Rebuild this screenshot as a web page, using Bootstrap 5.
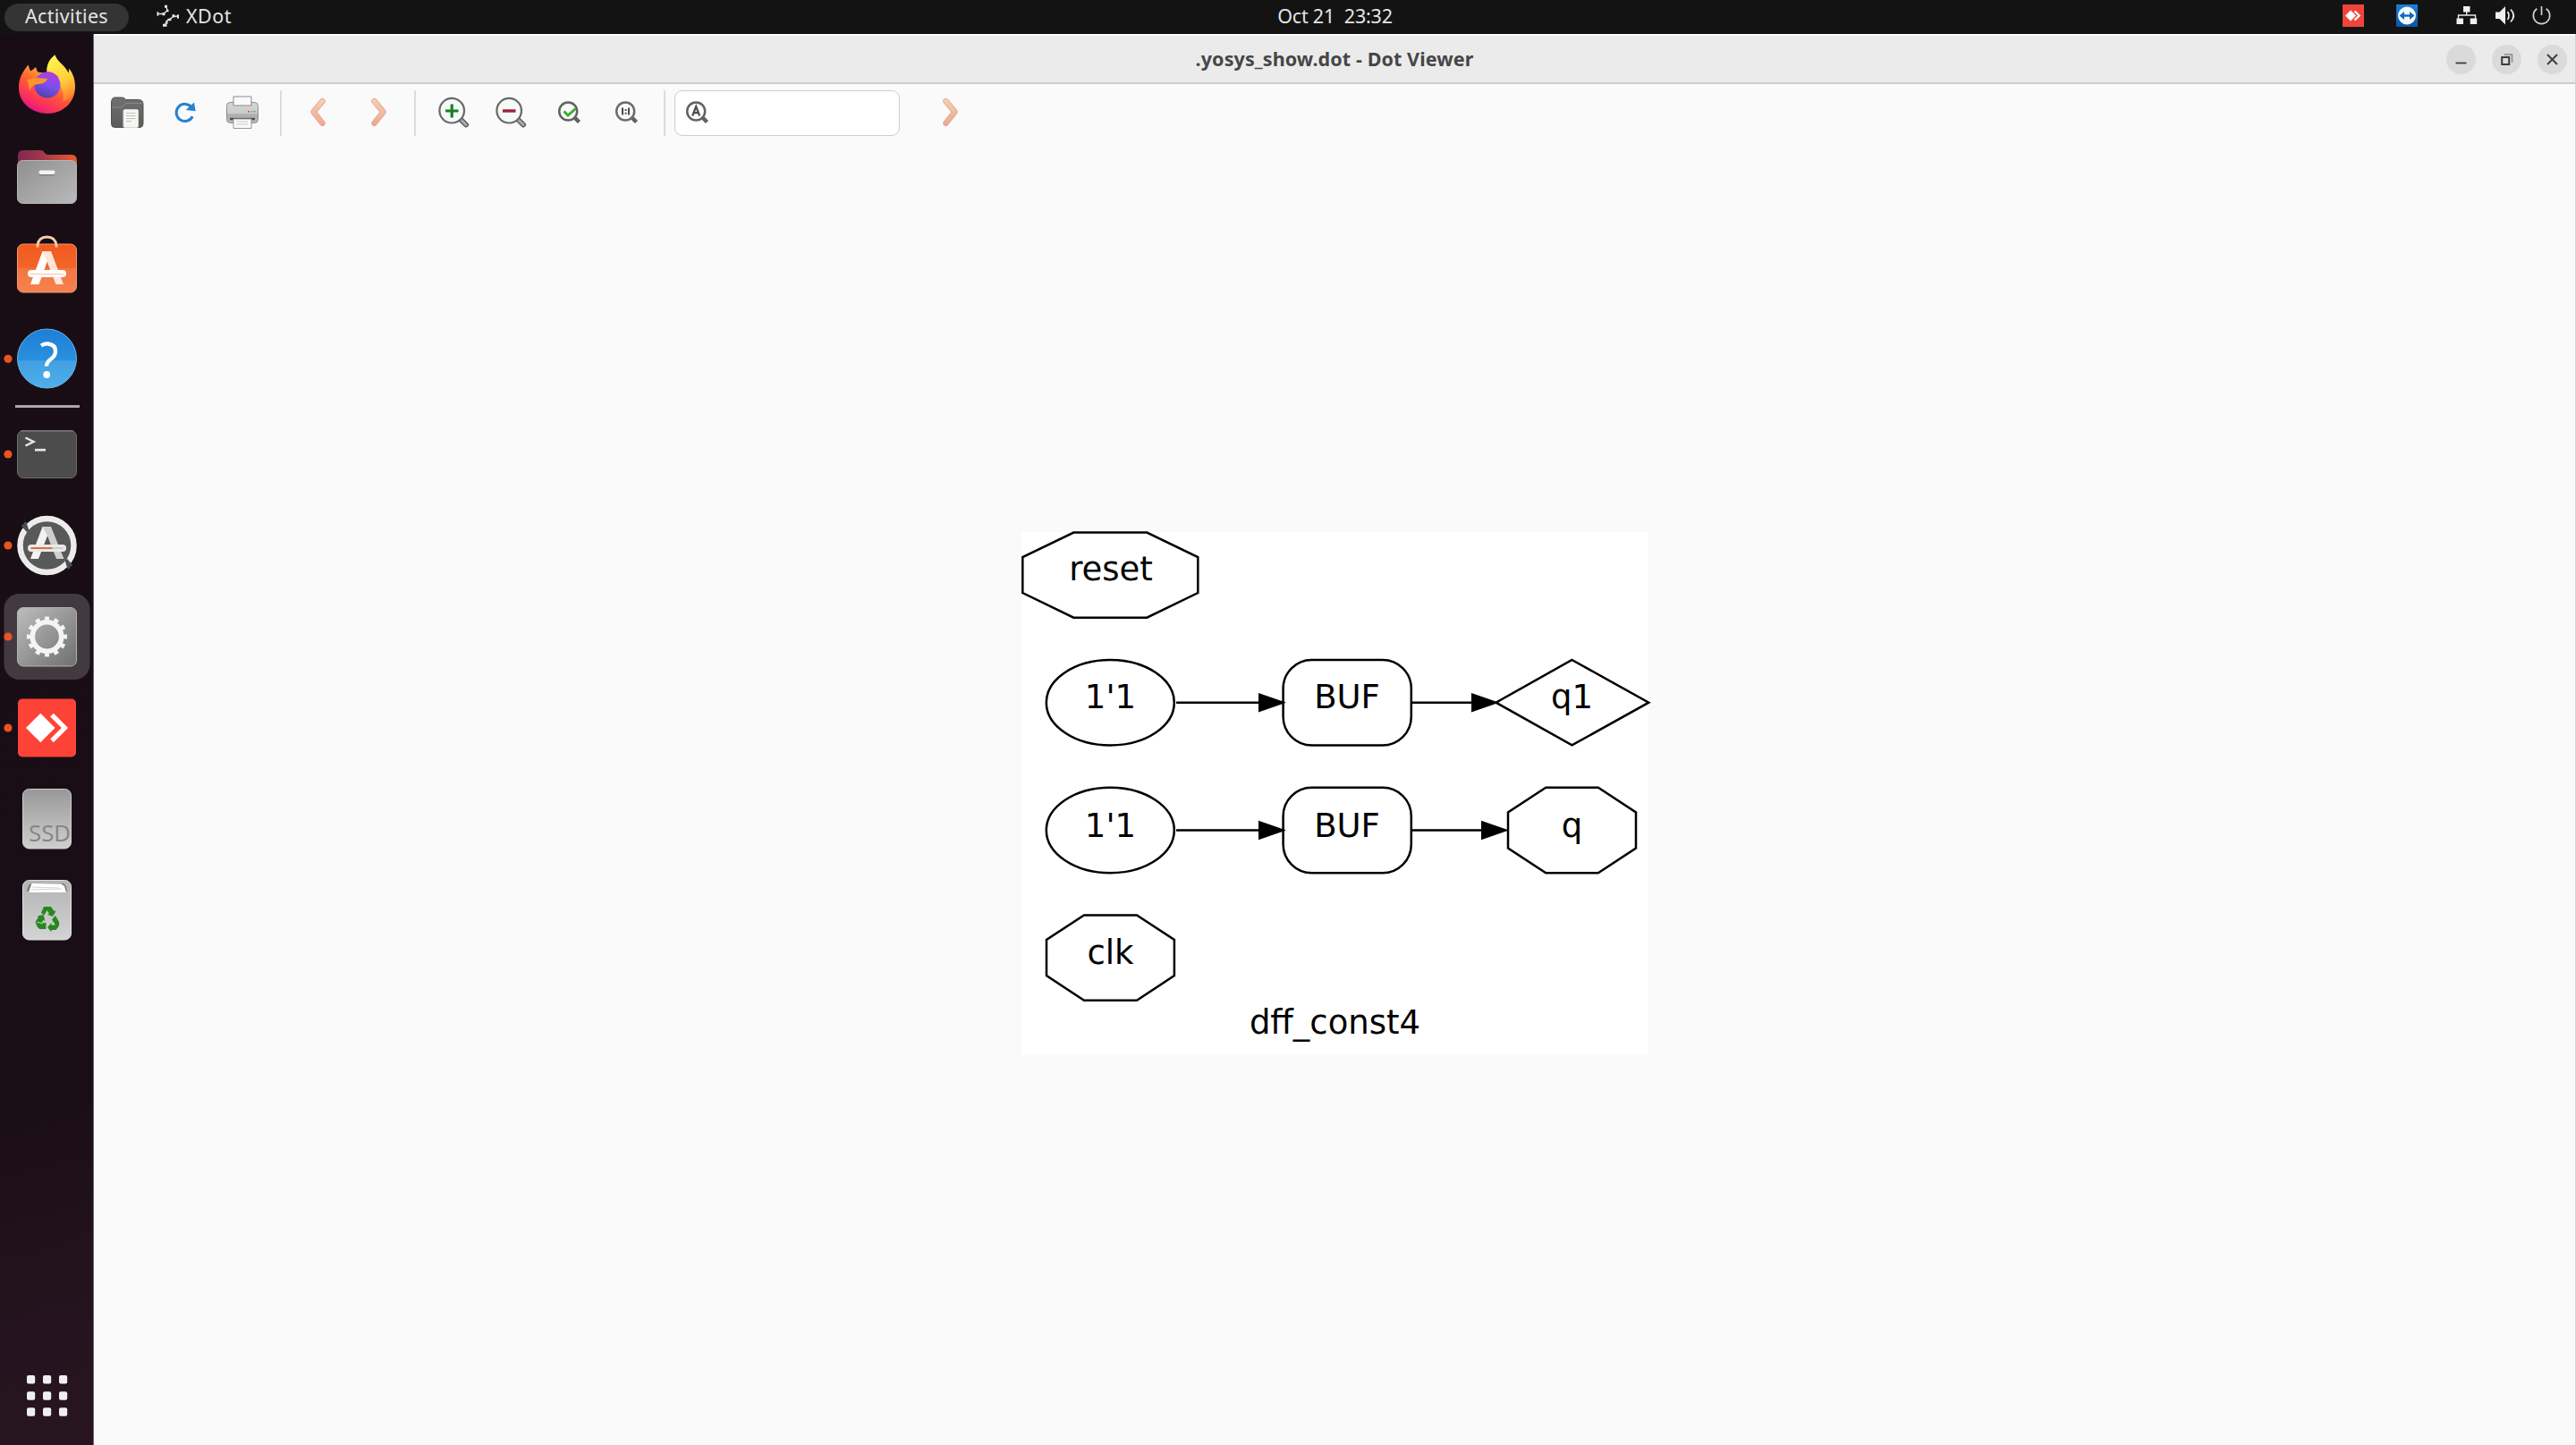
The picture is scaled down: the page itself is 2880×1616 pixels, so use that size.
<!DOCTYPE html>
<html lang="en">
<head>
<meta charset="utf-8">
<title>.yosys_show.dot - Dot Viewer</title>
<link href="https://cdn.jsdelivr.net/npm/bootstrap@5.3.0/dist/css/bootstrap.min.css" rel="stylesheet">
<style>
html,body{height:100%;overflow:hidden}
body{font-family:"Noto Sans","Open Sans",sans-serif;background:#fafafa;line-height:1}
svg{display:block;flex:none}
.topbar{height:38px;background:#131313;color:#e4e4e4;font-size:21.5px}
.topbar span{padding-bottom:2px}
.topbar-start{width:1417.5px}
.topbar-clock{width:150px;white-space:pre}
.activities{width:139px;height:31px;margin-left:5px;border-radius:16px;background:#343434}
.t-act{letter-spacing:.35px}
.t-xdot{letter-spacing:.5px;margin-left:2px}
.t-clock{letter-spacing:-.2px}
.dock{width:105px;padding:6px 0 4px;background:linear-gradient(165deg,#190d15 0%,#1a0e16 75%,#25141f 92%,#27141f 100%);border-right:1px solid #6b6468}
.dock-rule{width:72px;height:2.5px;margin:1.3px 0 1.2px 17px;background:#a9a6a8}
.titlebar{height:56px;background:#ebebeb;border-top:2px solid #fcfcfc;border-bottom:2px solid #cdcdcd;color:#464646}
.titlebar-side{width:162px}
.t-title{font-size:21.5px;font-weight:700;letter-spacing:.1px}
.win-btn{width:33px;height:33px;background:#dadada}
.toolbar{height:64px;padding-left:5px}
.tool{width:64.5px;height:64px}
.tool-rule{width:1.6px;height:51px;margin:0 9.7px;background:#dcdcdc}
.find{width:252px;height:51px;margin-left:1px;border:1.5px solid #cdcdcd;border-radius:9px;background:#fff;padding-left:10px}
.find-next{margin-left:21px}
.viewer{border-right:1px solid #d4d4d4}
</style>
<script src="https://cdn.jsdelivr.net/npm/bootstrap@5.3.0/dist/js/bootstrap.bundle.min.js"></script>
</head>
<body class="d-flex flex-column">
<svg width="0" height="0" class="position-absolute">
<defs>
<linearGradient id="ffBody" x1=".8" y1="0" x2=".3" y2="1"><stop offset="0" stop-color="#fff04a"/><stop offset=".3" stop-color="#ffb62e"/><stop offset=".6" stop-color="#ff5a36"/><stop offset=".85" stop-color="#fb2d60"/><stop offset="1" stop-color="#d8128a"/></linearGradient>
<linearGradient id="ffFlame" x1=".4" y1="0" x2=".7" y2="1"><stop offset="0" stop-color="#fff44f"/><stop offset=".55" stop-color="#ffcf3a"/><stop offset="1" stop-color="#ff7a2e"/></linearGradient>
<linearGradient id="ffGlobe" x1=".7" y1="0" x2=".3" y2="1"><stop offset="0" stop-color="#b73be2"/><stop offset=".5" stop-color="#7a50f0"/><stop offset="1" stop-color="#4b3fa8"/></linearGradient>
<linearGradient id="folderBack"><stop offset="0" stop-color="#7d2950"/><stop offset=".45" stop-color="#a5394a"/><stop offset="1" stop-color="#ea5b2a"/></linearGradient>
<linearGradient id="steel" x1="0" y1="0" x2="1" y2="1"><stop offset="0" stop-color="#8f8f8f"/><stop offset="1" stop-color="#bababa"/></linearGradient>
<linearGradient id="gearBg" x1="0" y1="0" x2="1" y2="1"><stop offset="0" stop-color="#bdbdbd"/><stop offset="1" stop-color="#6f6f6f"/></linearGradient>
<linearGradient id="ssdBg" x1="0" y1="0" x2="0" y2="1"><stop offset="0" stop-color="#989898"/><stop offset="1" stop-color="#cfcfcf"/></linearGradient>
<linearGradient id="binBg" x1="0" y1="0" x2="0" y2="1"><stop offset="0" stop-color="#b3b3b3"/><stop offset="1" stop-color="#d4d4d4"/></linearGradient>
<linearGradient id="bagBg" x1="0" y1="0" x2="0" y2="1"><stop offset="0" stop-color="#f35a1f"/><stop offset=".49" stop-color="#f26529"/><stop offset=".5" stop-color="#f37540"/><stop offset="1" stop-color="#f58350"/></linearGradient>
<linearGradient id="helpBg" x1="0" y1="0" x2="0" y2="1"><stop offset="0" stop-color="#1b7fd8"/><stop offset=".53" stop-color="#2a90de"/><stop offset=".54" stop-color="#429fe2"/><stop offset="1" stop-color="#4fb0ea"/></linearGradient>
<linearGradient id="peach" gradientUnits="userSpaceOnUse" x1="0" y1="8" x2="0" y2="40"><stop offset="0" stop-color="#f3d2b2"/><stop offset="1" stop-color="#f0a48e"/></linearGradient>
<linearGradient id="darkFolder" x1="0" y1="0" x2="0" y2="1"><stop offset="0" stop-color="#707070"/><stop offset="1" stop-color="#5c5c5c"/></linearGradient>
<linearGradient id="printBg" x1="0" y1="0" x2="0" y2="1"><stop offset="0" stop-color="#d6d6d6"/><stop offset=".55" stop-color="#cbcbcb"/><stop offset=".57" stop-color="#aeaeae"/><stop offset="1" stop-color="#b8b8b8"/></linearGradient>
<linearGradient id="tvBg" x1="0" y1="0" x2="0" y2="1"><stop offset="0" stop-color="#1b82d8"/><stop offset="1" stop-color="#0a55a4"/></linearGradient>
</defs>
</svg>

<header class="topbar d-flex align-items-center flex-shrink-0">
  <div class="topbar-start d-flex align-items-center">
    <div class="activities d-flex align-items-center justify-content-center"><span class="t-act">Activities</span></div>
    <svg class="ms-4" width="38" height="38" viewBox="168 0 38 38" fill="none" stroke="#e4e4e4" stroke-width="1.300"><path d="M177 15.500L183 15.500L187 11.500L186 7M189 22L194 18.500L199 18M184 28L187 23L189 22"/><g fill="#e4e4e4" stroke="none"><path d="M175.500 13h1.800v4.500h-1.800zM184 5.500h3v3h-3zM181.500 14h3v3h-3zM186 10.500h2.500v2.500h-2.500zM187.500 20.500h4v2.500h-4zM192.500 16h3v3h-3zM198 16h2v4.500h-2zM185.500 22.500h2v4h-2zM182 26.500h4.500v3h-4.500z" transform="translate(0 .3)"/></g></svg>
    <span class="t-xdot">XDot</span>
  </div>
  <div class="topbar-clock text-center"><span class="t-clock d-inline-block">Oct 21  23:32</span></div>
  <div class="ms-auto">
    <svg width="280" height="38" viewBox="2600 0 280 38">
      <path fill="#ef443b" d="M2619 5h24v25h-24z"/><path fill="#fff" d="M2622 17.500l6-6 6 6-6 6z"/><path d="M2632.500 12.500l5.200 5-5.200 5" fill="none" stroke="#fff" stroke-width="2.200"/>
      <path fill="url(#tvBg)" d="M2679 5h24v25h-24z"/><circle cx="2691" cy="17.500" r="10" fill="#f6f8fb"/><path fill="#1269bd" d="M2682.500 17.500l5.500-4.500v3.200h6v-3.200l5.500 4.500-5.500 4.500v-3.200h-6v3.200z"/>
      <g fill="#efefef"><path d="M2754 7h7.500v6.500h-7.500zM2746.500 20.500h7.500v6.500h-7.500zM2761.700 20.500h7.500v6.500h-7.500z"/><path d="M2790 13.500h4.500l6.500-6.500v20.500l-6.500-6.500h-4.500z"/></g>
      <g fill="none" stroke="#e8e8e8" stroke-width="1.400"><path d="M2757.700 13v4M2748.500 21v-4h19v4"/><path d="M2803.500 13q3 4.500 0 9M2807 10.500q6.500 7 0 14" stroke-width="1.800"/><path d="M2836.300 9.800a9.200 9.200 0 1 0 10.400 0M2841.500 7v10" stroke-width="1.700" stroke="#cfcfcf"/></g>
    </svg>
  </div>
</header>

<div class="d-flex flex-grow-1">
  <nav class="dock d-flex flex-column flex-shrink-0">
    <svg width="105" height="102" viewBox="0 0 105 102">
      <path fill="url(#ffBody)" d="M21 54C21 43 25 37 31.500 28.500L34 35.500Q37 34 40 31L42 36.500L53 38C51 31 55 22 61.500 17.500C64 26 73 29 76.500 38L77.500 33Q84 41 84 53C84 71 70 83 53 83S21 71 21 54z"/>
      <path fill="url(#ffFlame)" d="M53 38C51 31 55 22 61.500 17.500C64 26 73 29 76.500 38L77.500 33Q85 45 83 56Q80 67 70 70Q73 60 67 52Q67 42 53 38z"/>
      <circle cx="53" cy="51" r="14.500" fill="url(#ffGlobe)"/>
      <path fill="#ff9428" d="M30 45Q40 42 53 44Q51 50 42 50Q35 51 33 58Q32 50 30 45z"/>
      <path fill="#b13bd4" d="M49 38Q57 33 66 43L58 41z"/>
    </svg>
    <svg width="105" height="102" viewBox="0 0 105 102">
      <path fill="url(#folderBack)" d="M20 50V28q0-6 6-6h20q2.500 0 4 3q1 2 4 2h26q6 0 6 7v16z"/>
      <rect x="19.500" y="33.500" width="66" height="48" rx="6" fill="url(#steel)" stroke="#b5b5b5" stroke-width="1"/>
      <path stroke="#808080" stroke-width="4.500" stroke-linecap="round" d="M46 48.300h13"/><path stroke="#f3f3f3" stroke-width="4.500" stroke-linecap="round" d="M45.700 46.800h13.600"/>
    </svg>
    <svg width="105" height="102" viewBox="0 0 105 102">
      <rect x="19.500" y="29" width="66" height="54" rx="6.500" fill="url(#bagBg)" stroke="#f6986d" stroke-width="1" transform="translate(0 -4)"/>
      <path d="M42 28.500v-2q1-9.500 10.500-9.500t10.500 9.500v2" fill="none" stroke="#f3d0a6" stroke-width="2.800"/>
      <path fill="#fff" d="M47.500 33h9.500l-13.500 37h-9.500z"/><path fill="#fde5da" d="M47.500 33h9.500l14 37h-8.500l-10.500-27z"/>
      <rect x="31" y="54" width="43" height="8" rx="4" fill="#fff"/><path d="M34 58.400h37" stroke="#f6c3ab"/>
    </svg>
    <svg width="105" height="102" viewBox="0 0 105 102">
      <circle cx="9" cy="51.300" r="4.600" fill="#e95420"/>
      <circle cx="52.500" cy="51" r="33" fill="url(#helpBg)" stroke="#6bb6ec" stroke-width="1"/>
      <path d="M46 36.500q4-2.500 8-2q8 1 8 8.500q0 5-5 8.500q-5 3.500-5 8" fill="none" stroke="#fff" stroke-width="4.300"/><circle cx="52.200" cy="69" r="3.900" fill="#fff"/>
    </svg>
    <div class="dock-rule"></div>
    <svg width="105" height="102" viewBox="0 0 105 102">
      <circle cx="9" cy="51" r="4.600" fill="#e95420"/>
      <rect x="19.500" y="24.500" width="66" height="53" rx="6.500" fill="#4c4c4c" stroke="#6a6a6a" stroke-width="1"/><path d="M23 25h59" stroke="#838383"/>
      <path d="M28.500 32.500l9 4.500-9 4.500" fill="none" stroke="#e6e6e6" stroke-width="2.500"/><path d="M39 46.200h12" stroke="#e6e6e6" stroke-width="2.700"/>
    </svg>
    <svg width="105" height="102" viewBox="0 0 105 102">
      <circle cx="9" cy="51" r="4.600" fill="#e95420"/>
      <circle cx="52.500" cy="51" r="30" fill="#595959" stroke="#ececec" stroke-width="6.500"/>
      <path d="M25 28l6 7-3-10M80 74l-6-7 3 10" stroke="#4e4e4e" stroke-width="3" fill="none"/>
      <path fill="#f2f2f2" d="M47.500 30h9.500l-14 36h-9z"/><path fill="#cfcfcf" d="M47.500 30h9.500l14.500 36h-8.500l-10.500-27z"/>
      <rect x="31" y="50" width="43" height="8" rx="4" fill="#e9e9e9"/><path d="M34.500 54h24" stroke="#d2622f" stroke-width="1.800"/><path d="M58.500 54h12" stroke="#c4c4c4" stroke-width="1.500"/>
    </svg>
    <svg width="105" height="102" viewBox="0 0 105 102">
      <rect x="4.500" y="3" width="96" height="96" rx="17" fill="#423a3f"/>
      <circle cx="9" cy="51" r="4.600" fill="#e95420"/>
      <rect x="19.500" y="18.500" width="66" height="65.500" rx="6.500" fill="url(#gearBg)" stroke="#b2b2b2" stroke-width="1"/>
      <circle cx="52.500" cy="51" r="16.200" fill="none" stroke="#f4f4f2" stroke-width="5.600"/>
      <circle cx="52.500" cy="51" r="20.200" fill="none" stroke="#f4f4f2" stroke-width="4.600" pathLength="120" stroke-dasharray="4.700 5.300" stroke-dashoffset="2.350"/>
    </svg>
    <svg width="105" height="102" viewBox="0 0 105 102">
      <circle cx="9" cy="51" r="4.600" fill="#e95420"/>
      <rect x="20" y="18.500" width="65" height="65" rx="5" fill="#fd4338"/>
      <path fill="#fff" d="M29 51l16.300-16.200 16.200 16.200-16.200 16.200z"/><path d="M58 36.700l14.400 14.300-14.400 14.300" fill="none" stroke="#fff" stroke-width="5.200"/>
    </svg>
    <svg width="105" height="102" viewBox="0 0 105 102">
      <rect x="25.500" y="17.500" width="54" height="66.500" rx="7" fill="url(#ssdBg)" stroke="#cdcdcd" stroke-width="1"/>
      <text x="32" y="76" font-family="Open Sans, sans-serif" font-size="25" fill="#858585" textLength="47" lengthAdjust="spacingAndGlyphs">SSD</text>
    </svg>
    <svg width="105" height="102" viewBox="0 0 105 102">
      <rect x="25.500" y="17.500" width="54" height="66.500" rx="7" fill="url(#binBg)" stroke="#dedede" stroke-width="1"/>
      <path fill="#7c7c7c" d="M30 30q1-9 6-9h34q4 0 5 9z"/><path fill="#fff" d="M32 31l3.500-10 33 .5 3.500 2.500 2 7z"/><path d="M36 25l30 1M35 28l34-1" stroke="#d3d3d3"/>
      <g fill="#27871f"><path d="M46 54l3-7h8l3.500 5 2-1-2.500 7-7-2 2-1-2.500-4-3 5.500z"/><path d="M62 57l4 7q1 3-1 6l-2.500 3h-5v2.500l-4.500-5.500 4.500-5v2.500h4.500l-4-6z"/><path d="M41.500 57.500l7-1.500 2 7-2-1-2 3h5v7h-7q-2-1-3-3l-2-5 3.500-5.500z"/></g>
      <path d="M41 64l7 2M59 57l5-3.500" stroke="#c9c9c9" stroke-width="1"/>
    </svg>
    <svg class="mt-auto" width="105" height="102" viewBox="0 0 105 102" fill="#f0eeee"><rect x="30" y="28" width="9.200" height="9.600" rx="2"/><rect x="48" y="28" width="9.200" height="9.600" rx="2"/><rect x="66" y="28" width="9.200" height="9.600" rx="2"/><rect x="30" y="46.200" width="9.200" height="9.600" rx="2"/><rect x="48" y="46.200" width="9.200" height="9.600" rx="2"/><rect x="66" y="46.200" width="9.200" height="9.600" rx="2"/><rect x="30" y="64.200" width="9.200" height="9.600" rx="2"/><rect x="48" y="64.200" width="9.200" height="9.600" rx="2"/><rect x="66" y="64.200" width="9.200" height="9.600" rx="2"/></svg>
  </nav>

  <main class="viewer flex-grow-1 d-flex flex-column">
    <div class="titlebar d-flex align-items-center">
      <div class="titlebar-side"></div>
      <div class="flex-grow-1 text-center"><span class="t-title">.yosys_show.dot - Dot Viewer</span></div>
      <div class="titlebar-side d-flex" style="gap:18px;padding-left:17.5px">
        <div class="win-btn rounded-circle"><svg width="33" height="33" viewBox="0 0 33 33"><path d="M10.500 20.500h12" stroke="#3c3c3c" stroke-width="1.800"/></svg></div>
        <div class="win-btn rounded-circle"><svg width="33" height="33" viewBox="0 0 33 33" fill="none" stroke="#3c3c3c"><path d="M11.200 14h8v8h-8z" stroke-width="2"/><path d="M13.500 11h9v9" stroke="#8c8c8c" stroke-width="1.500"/></svg></div>
        <div class="win-btn rounded-circle"><svg width="33" height="33" viewBox="0 0 33 33"><path d="M11 11l11 11M22 11l-11 11" stroke="#3c3c3c" stroke-width="1.900"/></svg></div>
      </div>
    </div>

    <div class="toolbar d-flex align-items-center">
      <div class="tool d-flex align-items-center justify-content-center"><svg width="48" height="48" viewBox="0 0 48 48"><path fill="url(#darkFolder)" stroke="#505050" d="M6.500 13q0-6 4-6h8q3 0 4 2.500h14q5.500 0 5.500 5v22q0 4-4 4h-27.500q-4 0-4-4z"/><path d="M7 18h11l5-4.500h18" fill="none" stroke="#8a8a8a"/><rect x="20" y="20.500" width="16.500" height="20" rx="1.500" fill="#f5f5f3" stroke="#d8d8d8"/><path d="M23 24.500h10.500M23 27.500h10.500M23 30.500h10.500M23 33.500h6" stroke="#c3c0b8" stroke-width="1.200"/></svg></div>
      <div class="tool d-flex align-items-center justify-content-center"><svg width="48" height="48" viewBox="0 0 48 48"><path d="M32.300 28.300a9.600 9.600 0 1 1-.8-10" fill="none" stroke="#2582d2" stroke-width="3"/><path fill="#2582d2" d="M34 12.500l1.700 9.700-11-1.200z"/></svg></div>
      <div class="tool d-flex align-items-center justify-content-center"><svg width="48" height="48" viewBox="0 0 48 48"><rect x="6.500" y="12.500" width="35" height="23" rx="4" fill="url(#printBg)" stroke="#8f8f8f"/><path d="M14 16V6h20v10z" fill="#fafafa" stroke="#8a8a8a"/><path d="M10 31h28" stroke="#4c4c4c" stroke-width="2.500"/><path d="M14 31h20v10.500h-20z" fill="#fafafa" stroke="#979797"/><path d="M17.500 34h12.500M17.500 37h12.500" stroke="#c8c5bf" stroke-width="1.200"/><path d="M30 22.700h2" stroke="#d44" stroke-width="1.500"/><path d="M33.500 22.700h2" stroke="#d84" stroke-width="1.500"/><path d="M36.500 22.700h2" stroke="#3b5" stroke-width="1.500"/></svg></div>
      <div class="tool-rule"></div>
      <div class="tool d-flex align-items-center justify-content-center"><svg width="48" height="48" viewBox="0 0 48 48"><g fill="none" stroke-linecap="round" stroke-linejoin="round"><path d="M27.500 11.500L17.500 23.500L27.500 36" transform="translate(0 -.3)" stroke="#e3a58f" stroke-width="6.500"/><path d="M27.500 11.500L17.500 23.500L27.500 36" transform="translate(0 -.3)" stroke="url(#peach)" stroke-width="5"/></g></svg></div>
      <div class="tool d-flex align-items-center justify-content-center"><svg width="48" height="48" viewBox="0 0 48 48"><g fill="none" stroke-linecap="round" stroke-linejoin="round"><path d="M21.500 11.500L31.500 23.500L21.500 36" transform="translate(0 -.3)" stroke="#e3a58f" stroke-width="6.500"/><path d="M21.500 11.500L31.500 23.500L21.500 36" transform="translate(0 -.3)" stroke="url(#peach)" stroke-width="5"/></g></svg></div>
      <div class="tool-rule"></div>
      <div class="tool d-flex align-items-center justify-content-center"><svg width="48" height="48" viewBox="0 0 48 48"><path d="M32 31.500l6 6" stroke="#5f5f5f" stroke-width="6" stroke-linecap="round"/><path d="M32.500 32l5.500 5.500" stroke="#ababab" stroke-width="3" stroke-linecap="round"/><circle cx="22.200" cy="21.700" r="13.800" fill="#f4faf8" stroke="#696969" stroke-width="2.200"/><path d="M15 22h14.500M22.200 14.500v15" stroke="#1a7f22" stroke-width="3.200"/></svg></div>
      <div class="tool d-flex align-items-center justify-content-center"><svg width="48" height="48" viewBox="0 0 48 48"><path d="M32 31.500l6 6" stroke="#5f5f5f" stroke-width="6" stroke-linecap="round"/><path d="M32.500 32l5.500 5.500" stroke="#ababab" stroke-width="3" stroke-linecap="round"/><circle cx="22.200" cy="21.700" r="13.800" fill="#f4faf8" stroke="#696969" stroke-width="2.200"/><path d="M15 22h14.500" stroke="#a01f38" stroke-width="3.400"/></svg></div>
      <div class="tool d-flex align-items-center justify-content-center"><svg width="48" height="48" viewBox="0 0 48 48"><path d="M31 30l4.500 4.500" stroke="#62625e" stroke-width="4.500"/><circle cx="23.200" cy="22.500" r="10" fill="#fafafa" stroke="#62625e" stroke-width="2.500"/><path d="M18.500 22.500l4.500 4.500 8.500-7.500" fill="none" stroke="#3dab33" stroke-width="3"/></svg></div>
      <div class="tool d-flex align-items-center justify-content-center"><svg width="48" height="48" viewBox="0 0 48 48"><path d="M31 30l4.500 4.500" stroke="#62625e" stroke-width="4.500"/><circle cx="23.200" cy="22.500" r="10" fill="#fafafa" stroke="#6b6b67" stroke-width="2.500"/><path d="M20 18.500v8M27 18.500v8" stroke="#484848" stroke-width="2"/><path d="M22.600 20h1.900v1.900h-1.900zM22.600 23.800h1.900v1.900h-1.900z" fill="#484848"/></svg></div>
      <div class="tool-rule"></div>
      <div class="find d-flex align-items-center"><svg width="28" height="48" viewBox="10 0 28 48"><path d="M31 30l4.500 4.500" stroke="#62625e" stroke-width="4.500"/><circle cx="23.200" cy="22.500" r="10" fill="#fff" stroke="#62625e" stroke-width="2.500"/><path d="M19.200 27.500l4-10.500 4 10.500M20.500 24.200h5.500" fill="none" stroke="#4c4c4c" stroke-width="2.200"/></svg></div>
      <div class="tool find-next d-flex align-items-center justify-content-center"><svg width="48" height="48" viewBox="0 0 48 48"><g fill="none" stroke-linecap="round" stroke-linejoin="round"><path d="M21.500 11.500L31.500 23.500L21.500 36" transform="translate(0 -.3)" stroke="#e3a58f" stroke-width="6.500"/><path d="M21.500 11.500L31.500 23.500L21.500 36" transform="translate(0 -.3)" stroke="url(#peach)" stroke-width="5"/></g></svg></div>
    </div>

    <svg width="2774" height="1458" viewBox="105 158 2774 1458" font-family="DejaVu Sans, sans-serif" font-size="37" text-anchor="middle">
      <path fill="#fff" d="M1142 595h701v585h-701z"/>
      <g fill="none" stroke="#000" stroke-width="2.500">
        <path d="M1200.300 595.500h82L1339.300 623v40L1282.300 690.700h-82L1143.300 663v-40z"/>
        <ellipse cx="1241.300" cy="785.700" rx="71.500" ry="47.700"/><ellipse cx="1241.300" cy="928.500" rx="71.500" ry="47.700"/>
        <rect x="1434.600" y="738" width="143.200" height="95.400" rx="32"/><rect x="1434.600" y="880.800" width="143.200" height="95.400" rx="32"/>
        <path d="M1757.500 738L1843.300 785.700L1757.500 833.400L1672.500 785.700z"/>
        <path d="M1728.300 880.800h58.500L1829 908.500v40L1786.800 976.200h-58.500L1686 948.500v-40z"/>
        <path d="M1212 1023.500h59L1312.900 1051v40L1271 1118.700h-59L1170 1091v-40z"/>
        <path d="M1315 785.700h93M1315 928.500h93M1578 785.700h68M1578 928.500h79"/>
      </g>
      <path d="M1407 775l31 10.700-31 10.700zM1407 917.800l31 10.700-31 10.700zM1645 775l31 10.700-31 10.700zM1656 917.800l31 10.700-31 10.700z"/>
      <text x="1242" y="649">reset</text>
      <text x="1241.500" y="791.500">1'1</text><text x="1506" y="791.500">BUF</text><text x="1757.500" y="791.500">q1</text>
      <text x="1241.500" y="935.500">1'1</text><text x="1506" y="935.500">BUF</text><text x="1757.500" y="935.500">q</text>
      <text x="1241.500" y="1078">clk</text>
      <text x="1492.500" y="1155.700">dff_const4</text>
    </svg>
  </main>
</div>
</body>
</html>
